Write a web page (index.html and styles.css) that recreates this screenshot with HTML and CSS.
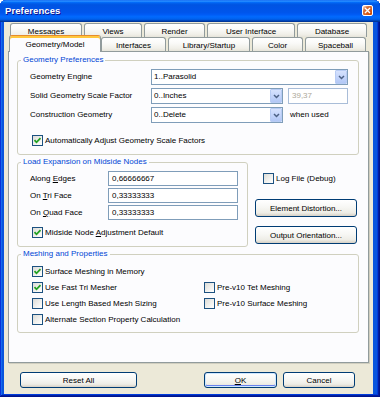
FILE: index.html
```html
<!DOCTYPE html>
<html>
<head>
<meta charset="utf-8">
<title>Preferences</title>
<link rel="stylesheet" href="styles.css">
</head>
<body>
<div class="window">
  <div class="titlebar">
    <span class="title">Preferences</span>
    <span class="close"><svg width="9" height="9" viewBox="0 0 9 9"><path d="M2 2 L7 7 M7 2 L2 7" stroke="#fff" stroke-width="1.4" fill="none"/></svg></span>
  </div>
  <div class="client">
    <div class="tabs">
      <div class="tabrow back">
        <div class="tab w72">Messages</div>
        <div class="tab w58">Views</div>
        <div class="tab w61">Render</div>
        <div class="tab w88">User Interface</div>
        <div class="tab w70">Database</div>
      </div>
      <div class="tabrow front">
        <div class="tab sel w88">Geometry/Model</div>
        <div class="tab w65">Interfaces</div>
        <div class="tab w82">Library/Startup</div>
        <div class="tab w51">Color</div>
        <div class="tab w61">Spaceball</div>
      </div>
    </div>
    <div class="panel">
      <fieldset class="group geo">
        <legend>Geometry Preferences</legend>
        <div class="gbody geo-body">
          <div class="geo-grid">
            <span class="lbl">Geometry Engine</span>
            <div class="combo span2"><span class="ctext">1..Parasolid</span><span class="cbtn"><svg width="7" height="5" viewBox="0 0 7 5"><path d="M1 1 L3.5 3.5 L6 1" fill="none" stroke="#4D6185" stroke-width="1.5"/></svg></span></div>
            <span class="lbl">Solid Geometry Scale Factor</span>
            <div class="combo"><span class="ctext">0..Inches</span><span class="cbtn"><svg width="7" height="5" viewBox="0 0 7 5"><path d="M1 1 L3.5 3.5 L6 1" fill="none" stroke="#4D6185" stroke-width="1.5"/></svg></span></div>
            <div class="edit disabled scale">39,37</div>
            <span class="lbl">Construction Geometry</span>
            <div class="combo"><span class="ctext">0..Delete</span><span class="cbtn"><svg width="7" height="5" viewBox="0 0 7 5"><path d="M1 1 L3.5 3.5 L6 1" fill="none" stroke="#4D6185" stroke-width="1.5"/></svg></span></div>
            <span class="note">when used</span>
          </div>
          <div class="check geo-check"><span class="box"><svg width="9" height="9" viewBox="0 0 9 9"><path d="M1.5 4.2 L3.5 6.3 L7.5 2.2" fill="none" stroke="#21A121" stroke-width="1.8"/></svg></span><span>Automatically Adjust Geometry Scale Factors</span></div>
        </div>
      </fieldset>
      <div class="mid">
        <fieldset class="group load">
          <legend>Load Expansion on Midside Nodes</legend>
          <div class="gbody load-body">
            <div class="load-grid">
              <span class="lbl">Along <u>E</u>dges</span>
              <div class="edit">0,66666667</div>
              <span class="lbl">On <u>T</u>ri Face</span>
              <div class="edit">0,33333333</div>
              <span class="lbl">On <u>Q</u>uad Face</span>
              <div class="edit">0,33333333</div>
            </div>
            <div class="check load-check"><span class="box"><svg width="9" height="9" viewBox="0 0 9 9"><path d="M1.5 4.2 L3.5 6.3 L7.5 2.2" fill="none" stroke="#21A121" stroke-width="1.8"/></svg></span><span>Midside Node <u>A</u>djustment Default</span></div>
          </div>
        </fieldset>
        <div class="side">
          <div class="check log-check"><span class="box"></span><span>Log File (Debug)</span></div>
          <div class="btn side-btn first">Element Distortion...</div>
          <div class="btn side-btn">Output Orientation...</div>
        </div>
      </div>
      <fieldset class="group mesh">
        <legend>Meshing and Properties</legend>
        <div class="gbody mesh-body">
          <div class="check"><span class="box"><svg width="9" height="9" viewBox="0 0 9 9"><path d="M1.5 4.2 L3.5 6.3 L7.5 2.2" fill="none" stroke="#21A121" stroke-width="1.8"/></svg></span><span>Surface Meshing in Memory</span></div>
          <div class="empty"></div>
          <div class="check"><span class="box"><svg width="9" height="9" viewBox="0 0 9 9"><path d="M1.5 4.2 L3.5 6.3 L7.5 2.2" fill="none" stroke="#21A121" stroke-width="1.8"/></svg></span><span>Use Fast Tri Mesher</span></div>
          <div class="check"><span class="box"></span><span>Pre-v10 Tet Meshing</span></div>
          <div class="check"><span class="box"></span><span>Use Length Based Mesh Sizing</span></div>
          <div class="check"><span class="box"></span><span>Pre-v10 Surface Meshing</span></div>
          <div class="check"><span class="box"></span><span>Alternate Section Property Calculation</span></div>
        </div>
      </fieldset>
    </div>
    <div class="footer">
      <div class="btn reset">Reset All</div>
      <div class="btn ok default"><span><u>O</u>K</span></div>
      <div class="btn cancel">Cancel</div>
    </div>
  </div>
</div>
</body>
</html>
```

FILE: styles.css
```css
* { box-sizing: border-box; }
html, body { margin: 0; padding: 0; }
body {
  width: 380px;
  height: 397px;
  overflow: hidden;
  background: #ffffff;
  font-family: "Liberation Sans", Arial, sans-serif;
  font-size: 8px;
  color: #000;
}
.window {
  width: 380px;
  height: 397px;
  display: flex;
  flex-direction: column;
  background: #0855DD;
  border-radius: 6px 6px 0 0;
  overflow: hidden;
  box-shadow: inset -1px -1px #00138C, inset 1px 1px #0831D9, inset -2px -2px #001EA0, inset 2px 2px #166AEE, inset -3px -3px #003BDA, inset 3px 3px #0855DD;
}
.titlebar {
  height: 22px;
  flex: none;
  display: flex;
  align-items: center;
  justify-content: space-between;
  padding: 0 7px 0 5px;
  background: linear-gradient(180deg, #0058EE 0%, #3593FF 4%, #288EFF 6%, #127DFF 8%, #036FFC 10%, #0262EE 14%, #0057E5 20%, #0054E3 24%, #0055EB 56%, #005BF5 66%, #026AFE 76%, #0062EF 86%, #0052D6 92%, #0040AB 94%, #003092 100%);
}
.title {
  color: #fff;
  font-weight: bold;
  font-size: 9.5px;
  letter-spacing: 0.1px;
  text-shadow: 1px 1px #0F1089;
  line-height: 12px;
  margin-top: -1px;
}
.close {
  width: 11px;
  height: 11px;
  margin-top: -2px;
  border: 1px solid #fff;
  border-radius: 2px;
  display: flex;
  align-items: center;
  justify-content: center;
  background: radial-gradient(circle at 90% 90%, #CC4600 0%, #DC6527 55%, #CD7546 70%, #FFCCB2 90%, #fff 100%);
}
.client {
  flex: 1;
  margin: 0 7px 3px 4px;
  background: #ECE9D8;
  display: flex;
  flex-direction: column;
}
.tabs {
  padding-top: 1px;
}
.tabrow {
  display: flex;
  align-items: flex-start;
  gap: 2px;
  height: 14px;
}
.tabrow.back { padding-left: 6px; }
.tabrow.front { padding-left: 7px; }
.tab {
  height: 14px;
  border: 1px solid #919B9C;
  border-bottom: none;
  border-radius: 3px 3px 0 0;
  background: linear-gradient(180deg, #FFFFFF 0%, #FAFAF8 40%, #F0EFE8 80%, #E6E4DA 100%);
  display: flex;
  align-items: center;
  justify-content: center;
  white-space: nowrap;
  padding-top: 1px;
}
.tab.sel {
  position: relative;
  z-index: 2;
  height: 17px;
  margin: -2px -2px -1px -2px;
  background: #FCFCFE;
  border-top: 1px solid #E68B2C;
  box-shadow: inset 0 2px #FFC73C;
  padding-top: 1px;
}
.w51 { width: 51px; }
.w58 { width: 58px; }
.w61 { width: 61px; }
.w65 { width: 65px; }
.w70 { width: 70px; }
.w72 { width: 72px; }
.w82 { width: 82px; }
.w88 { width: 88px; }
.tab.sel.w88 { width: 92px; }

.panel {
  margin-left: 4px;
  width: 361px;
  height: 312px;
  flex: none;
  background: #FCFCFE;
  border: 1px solid #919B9C;
  box-shadow: 1px 1px 0 #D0CEBF;
  padding: 2px 9px 0 8px;
}
.group {
  margin: 0;
  padding: 0;
  min-width: 0;
  border: 1px solid #D0D0BF;
  border-radius: 3px;
}
.group legend {
  margin-left: 3px;
  padding: 0 2px;
  color: #0046D5;
  line-height: 12px;
  font-size: 8px;
}
.lbl { line-height: 16px; white-space: nowrap; }
u { text-decoration: underline; text-underline-offset: 1px; }

.geo-body { padding: 3px 0 8px 12px; }
.geo-grid {
  display: grid;
  grid-template-columns: 121px 132px 65px;
  grid-auto-rows: 16px;
  row-gap: 3px;
}
.span2 { grid-column: 2 / span 2; }
.combo {
  height: 16px;
  border: 1px solid #7F9DB9;
  background: #fff;
  display: flex;
  align-items: center;
  justify-content: space-between;
}
.ctext { padding-left: 2px; line-height: 14px; }
.cbtn {
  width: 12px;
  height: 14px;
  border: 1px solid #B8CCF4;
  border-radius: 1px;
  background: linear-gradient(180deg, #D6E2FD 0%, #C4D5FB 50%, #B2C7F5 100%);
  display: flex;
  align-items: center;
  justify-content: center;
}
.edit {
  height: 15px;
  border: 1px solid #7F9DB9;
  background: #fff;
  padding-left: 3px;
  line-height: 13px;
}
.edit.scale {
  height: 16px;
  line-height: 14px;
  width: 60px;
  margin-left: 5px;
}
.edit.disabled {
  border-color: #A9BDD8;
  color: #ACA899;
}
.note {
  line-height: 16px;
  margin-left: 7px;
  white-space: nowrap;
}
.check {
  display: flex;
  align-items: center;
  white-space: nowrap;
  height: 16px;
}
.box {
  width: 11px;
  height: 11px;
  flex: none;
  margin-right: 2px;
  border: 1px solid #1C5180;
  background: linear-gradient(135deg, #DCDCD7 0%, #F6F6F4 70%, #FFFFFF 100%);
  display: flex;
  align-items: center;
  justify-content: center;
}
.geo-check { height: 11px; margin-top: 12px; margin-left: 2px; }

.mid {
  display: flex;
  align-items: flex-start;
  margin-top: 1px;
}
.load { width: 231px; flex: none; }
.load-body { padding: 3px 0 8px 12px; }
.load-grid {
  display: grid;
  grid-template-columns: 78px 130px;
  grid-auto-rows: 15px;
  row-gap: 2px;
}
.load-grid .lbl { line-height: 15px; }
.load-check { height: 11px; margin-top: 7px; margin-left: 2px; }
.side {
  margin-left: 7px;
  width: 102px;
  padding-top: 17px;
  display: flex;
  flex-direction: column;
}
.log-check { height: 11px; margin-left: 8px; }
.btn {
  border: 1px solid #003C74;
  border-radius: 3px;
  background: linear-gradient(180deg, #FFFFFF 0%, #F7F7F4 45%, #EEEDE6 80%, #D6D0C5 100%);
  display: flex;
  align-items: center;
  justify-content: center;
  white-space: nowrap;
}
.side-btn { height: 18px; margin-top: 9px; }
.side-btn.first { margin-top: 15px; }

.mesh { margin-top: 1px; }
.mesh-body {
  padding: 3px 0 5px 14px;
  display: grid;
  grid-template-columns: 172px 1fr;
  grid-auto-rows: 16px;
}

.footer {
  display: flex;
  margin-top: 9px;
  padding-left: 16px;
}
.footer .btn { height: 16px; }
.reset { width: 117px; }
.ok { width: 73px; margin-left: 67px; }
.cancel { width: 72px; margin-left: 6px; }
.default {
  box-shadow: inset 0 0 0 1px #CEE7FF, inset 0 -1px 0 1px #6982EE;
}
```
